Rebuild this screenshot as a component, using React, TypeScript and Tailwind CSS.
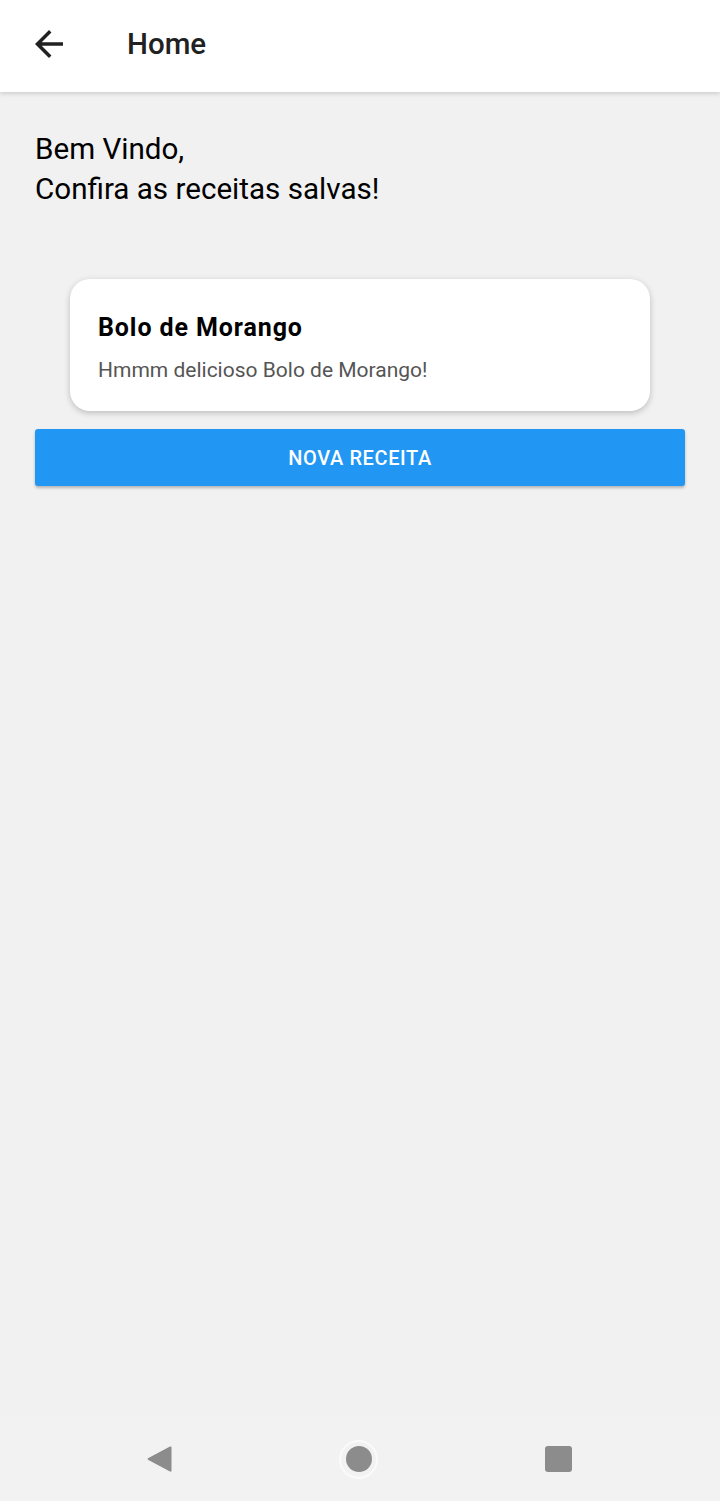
import { useState } from 'react';

type Recipe = {
	title: string;
	description: string;
};

const BackIcon = () => (
	<svg viewBox="0 0 24 24" className="h-[42px] w-[42px]" fill="#212121" aria-hidden="true">
		<path d="M20 11H7.83l5.59-5.59L12 4l-8 8 8 8 1.41-1.41L7.83 13H20v-2z" />
	</svg>
);

const NavBar = () => (
	<nav className="flex h-[84px] items-center justify-between bg-[#f2f2f2] pl-[146px] pr-[148px]">
		<svg viewBox="0 0 26 28" className="h-[28px] w-[26px]" aria-hidden="true">
			<path d="M24 1.5 L2 13.2 Q1 14 2 14.8 L24 26.5 Q25.5 27 25.5 25.5 L25.5 2.5 Q25.5 1 24 1.5Z" fill="#8c8c8c" />
		</svg>
		<div className="flex h-[39px] w-[39px] items-center justify-center rounded-full border-2 border-[#fafafa]">
			<div className="h-[26px] w-[26px] rounded-full bg-[#8c8c8c]" />
		</div>
		<div className="h-[26px] w-[27px] rounded-[3px] bg-[#8c8c8c]" />
	</nav>
);

const RecipeCard = ({ recipe }: { recipe: Recipe }) => (
	<div className="mx-[35px] flex h-[132px] flex-col justify-center rounded-[20px] bg-white px-[28px] pt-[4px] shadow-[0_2px_6px_rgba(0,0,0,0.22)]">
		<h2 className="text-[25px] font-bold leading-[30px] tracking-[0.9px] text-black">{recipe.title}</h2>
		<p className="mt-[15px] text-[21px] leading-[24px] text-[#555555]">{recipe.description}</p>
	</div>
);

export default function App() {
	const [recipes] = useState<Recipe[]>([
		{ title: 'Bolo de Morango', description: 'Hmmm delicioso Bolo de Morango!' },
	]);

	return (
		<div className="flex min-h-[1501px] flex-col bg-[#f1f1f1] font-['Roboto',sans-serif]">
			<header className="relative z-10 flex h-[92px] items-center bg-white pb-[4px] shadow-[0_2px_4px_rgba(0,0,0,0.14)]">
				<button className="ml-[28px] flex items-center">
					<BackIcon />
				</button>
				<h1 className="ml-[57px] text-[29.5px] font-medium text-[#212121]">Home</h1>
			</header>

			<main className="flex-1 px-[35px]">
				<div className="mt-[37px] text-[29.6px] leading-[40px] text-black">
					<p>Bem Vindo,</p>
					<p>Confira as receitas salvas!</p>
				</div>

				<div className="mt-[70px] flex flex-col gap-4">
					{recipes.map((recipe) => (
						<RecipeCard key={recipe.title} recipe={recipe} />
					))}
				</div>

				<button className="mt-[18px] flex h-[57px] w-full items-center justify-center rounded-[3px] bg-[#2196f3] text-[20px] font-medium uppercase tracking-[0.6px] text-white shadow-[0_2px_3px_rgba(0,0,0,0.25)]">
					Nova Receita
				</button>
			</main>

			<NavBar />
		</div>
	);
}
